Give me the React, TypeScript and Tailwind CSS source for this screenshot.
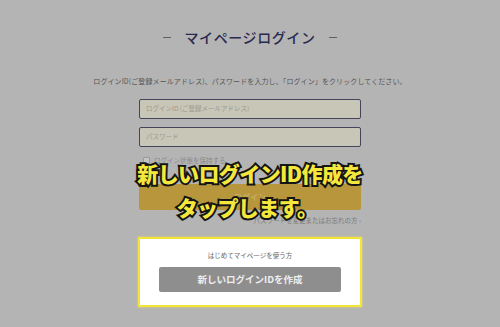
import React from "react";

const jp = { fontFamily: '"Noto Sans CJK JP", "Noto Sans", sans-serif' };

export default function App() {
  return (
    <div
      className="relative w-[500px] h-[327px] overflow-hidden bg-[#b4b4b4] flex flex-col items-center"
      style={jp}
    >
      {/* Title */}
      <div className="mt-[27px] flex items-center leading-[20px] text-[#2a2a50]">
        <span className="text-[11px] text-[#4a4a5a] mr-[12px]">－</span>
        <span className="text-[14px] font-medium tracking-[0.6px]">マイページログイン</span>
        <span className="text-[11px] text-[#4a4a5a] ml-[12px]">－</span>
      </div>

      {/* Instruction */}
      <div className="mt-[29px] text-[7px] leading-[10px] text-[#555] tracking-[0.1px]">
        ログインID(ご登録メールアドレス)、パスワードを入力し、「ログイン」をクリックしてください。
      </div>

      {/* Inputs */}
      <div className="mt-[13px] w-[222px] flex flex-col gap-[8px]">
        <div className="h-[20px] border border-[#44445a] rounded-[2px] bg-[#c8c6b6] flex items-center px-[6px] text-[6.5px] text-[#9b9a90]">
          ログインID (ご登録メールアドレス)
        </div>
        <div className="h-[20px] border border-[#44445a] rounded-[2px] bg-[#c8c6b6] flex items-center px-[6px] text-[6.5px] text-[#9b9a90]">
          パスワード
        </div>
      </div>

      {/* Checkbox row */}
      <div className="mt-[8px] w-[222px] flex items-center gap-[4px] leading-[10px] text-[6.5px] text-[#8a8a8a]">
        <span className="w-[7px] h-[7px] border border-[#999] bg-[#c4c4c4] rounded-[1px] ml-[4px]" />
        <span>ログイン状態を保持する</span>
      </div>

      {/* Login button */}
      <div className="mt-[19px] w-[222px] h-[26px] rounded-[2px] bg-[#b8973c] flex items-center justify-center text-[8px] text-[#cdb77a]">
        ログイン
      </div>

      {/* Link */}
      <div className="mt-[5px] w-[222px] flex justify-end leading-[10px] text-[6.5px] text-[#7a7a7a]">
        <span>パスワードを変更またはお忘れの方 ›</span>
      </div>

      {/* First time box */}
      <div className="mt-[12px] w-[224px] h-[70px] border-[2px] border-[#f2e43a] bg-white flex flex-col items-center shadow-[0_0_2px_#e8e060]">
        <div className="mt-[11px] leading-[10px] text-[6.5px] text-[#666]">はじめてマイページを使う方</div>
        <div className="mt-[7px] w-[182px] h-[25px] rounded-[2px] bg-[#8e8e8e] flex items-center justify-center text-[9.5px] font-bold text-[#eeeeee]">
          新しいログインIDを作成
        </div>
      </div>

      {/* Overlay caption */}
      <div className="absolute left-0 right-0 top-[156px] flex flex-col items-center leading-[34px] text-[21px] font-black text-[#f5e83c] tracking-[-0.6px] [-webkit-text-stroke:4px_#151515] [paint-order:stroke_fill]">
        <span>新しいログインID作成を</span>
        <span className="-ml-[6px]">タップします。</span>
      </div>
    </div>
  );
}
